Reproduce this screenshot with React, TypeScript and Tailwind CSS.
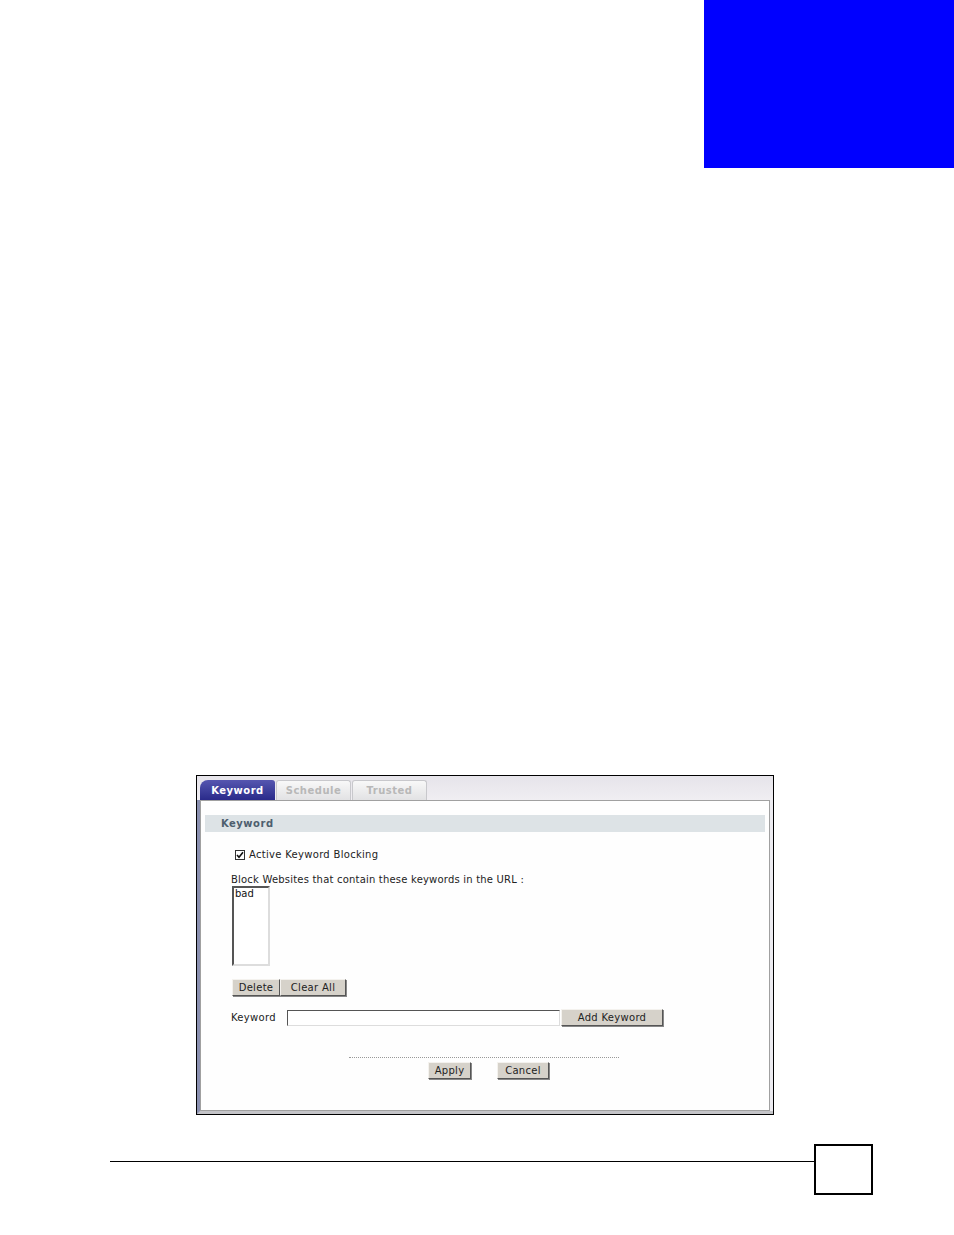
import React from "react";

const FONT = { fontFamily: '"DejaVu Sans", Verdana, sans-serif' };

function Btn({ label, className = "" }: { label: string; className?: string }) {
  return (
    <div
      className={`flex items-center justify-center border border-t-[#f4f2ee] border-l-[#f4f2ee] border-r-[#555] border-b-[#555] bg-[#d6d2ca] text-[10px] leading-none tracking-[0.3px] text-[#222] shadow-[1px_1px_0_#888] ${className}`}
    >
      {label}
    </div>
  );
}

function Tab({ label, active }: { label: string; active?: boolean }) {
  if (active) {
    return (
      <div className="flex h-[20px] w-[75px] items-center justify-center rounded-tl-[8px] rounded-tr-[3px] bg-gradient-to-b from-[#5656b0] to-[#2a2a8a] text-[10px] font-bold tracking-[0.5px] text-white">
        {label}
      </div>
    );
  }
  return (
    <div className="flex h-[20px] w-[75px] items-center justify-center rounded-t-[3px] border border-b-0 border-[#c8c8cc] bg-gradient-to-b from-[#f8f8f8] to-[#e2e2e4] text-[10px] font-bold tracking-[0.5px] text-[#b8b8b8]">
      {label}
    </div>
  );
}

export default function App() {
  return (
    <div className="relative h-[1235px] w-[954px] bg-white" style={FONT}>
      {/* chapter tab */}
      <div className="flex justify-end">
        <div className="h-[168px] w-[250px] bg-[#0000ff]" />
      </div>

      {/* screenshot */}
      <div className="ml-[196px] mt-[607px] flex h-[340px] w-[578px] flex-col border border-black bg-[#ecebf0]">
        {/* tab bar */}
        <div className="flex h-[24px] items-end gap-[1px] bg-gradient-to-b from-[#e6e4ea] to-[#f0eef2] pl-[3px]">
          <Tab label="Keyword" active />
          <Tab label="Schedule" />
          <Tab label="Trusted" />
        </div>

        <div className="flex flex-1 flex-col border-l-[3px] border-l-[#8a90b0] border-b-[3px] border-b-[#c4c4c8] pr-[3px]">
          <div className="flex flex-1 flex-col border border-[#a0a0a0] bg-[#fefefe] pb-[20px]">
            {/* section header */}
            <div className="mx-[4px] mt-[14px] flex h-[17px] items-center bg-[#dde3e6] pl-[16px] text-[10px] font-bold tracking-[0.5px] text-[#4e5e6e]">
              Keyword
            </div>

            <div className="flex items-center gap-[4px] pl-[34px] pt-[15px] text-[10px] tracking-[0.3px] text-[#222]">
              <div className="flex h-[10px] w-[10px] items-center justify-center border border-[#333] bg-white">
                <svg viewBox="0 0 8 8" className="h-[8px] w-[8px]">
                  <path d="M1 4l2 2.3L7 1.2" fill="none" stroke="#111" strokeWidth="1.6" />
                </svg>
              </div>
              <span>Active Keyword Blocking</span>
            </div>

            <div className="pl-[30px] pt-[13px] text-[10px] leading-none tracking-[0.2px] text-[#222]">
              Block Websites that contain these keywords in the URL :
            </div>

            <div className="ml-[31px] mt-[1px] h-[80px] w-[38px] border-2 border-t-[#555] border-l-[#555] border-r-[#ddd] border-b-[#ddd] bg-white pl-[1px] pt-[1px] text-[10px] leading-none text-[#111]">
              bad
            </div>

            <div className="ml-[31px] mt-[13px] flex">
              <Btn label="Delete" className="h-[17px] w-[48px]" />
              <Btn label="Clear All" className="h-[17px] w-[66px]" />
            </div>

            <div className="ml-[30px] mt-[13px] flex items-center text-[10px] tracking-[0.3px] text-[#222]">
              <span className="w-[56px]">Keyword</span>
              <div className="h-[16px] w-[273px] border border-t-[#555] border-l-[#555] border-r-[#ddd] border-b-[#ddd] bg-white" />
              <Btn label="Add Keyword" className="ml-[1px] h-[17px] w-[102px]" />
            </div>

            <div className="ml-[148px] mt-[31px] w-[270px] border-t border-dotted border-[#999]" />

            <div className="mt-[4px] flex pl-[227px]">
              <Btn label="Apply" className="h-[17px] w-[43px]" />
              <Btn label="Cancel" className="ml-[26px] h-[17px] w-[52px]" />
            </div>
          </div>
        </div>
      </div>

      {/* footer */}
      <div className="mt-[29px] flex items-center">
        <div className="ml-[110px] mt-[-16px] w-[704px] border-t border-black" />
        <div className="h-[51px] w-[59px] border-2 border-black" />
      </div>
    </div>
  );
}
